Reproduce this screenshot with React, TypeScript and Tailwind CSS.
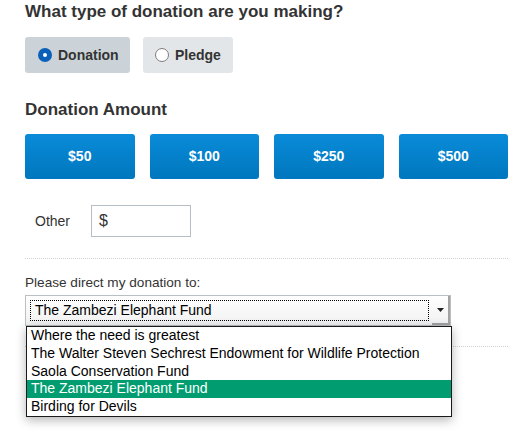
import React from 'react';

const amounts = ['$50', '$100', '$250', '$500'];

const funds = [
  'Where the need is greatest',
  'The Walter Steven Sechrest Endowment for Wildlife Protection',
  'Saola Conservation Fund',
  'The Zambezi Elephant Fund',
  'Birding for Devils',
];

const RadioDot = ({ checked }: { checked: boolean }) =>
  checked ? (
    <span className="w-[14px] h-[14px] rounded-full bg-[#0a5fb8] flex items-center justify-center">
      <span className="w-[4px] h-[4px] rounded-full bg-white" />
    </span>
  ) : (
    <span className="w-[14px] h-[14px] rounded-full bg-white border border-[#7d7d7d]" />
  );

const App = () => {
  const selected = 'The Zambezi Elephant Fund';

  return (
    <div className="w-[530px] h-[436px] bg-white pl-[25px] pr-[22px] pt-[2px] text-[#333] font-['Liberation_Sans',Arial,sans-serif] overflow-hidden">
      <h2 className="text-[17px] leading-[20px] font-bold">What type of donation are you making?</h2>

      <div className="flex gap-[13px] mt-[15px]">
        <label className="w-[105px] h-[36px] rounded-[3px] bg-[#ccd3d8] flex items-center pl-[13px] gap-[6px]">
          <RadioDot checked />
          <span className="text-[14px] font-bold">Donation</span>
        </label>
        <label className="w-[90px] h-[36px] rounded-[3px] bg-[#e3e6e9] flex items-center pl-[12px] gap-[6px]">
          <RadioDot checked={false} />
          <span className="text-[14px] font-bold">Pledge</span>
        </label>
      </div>

      <h2 className="text-[17px] leading-[20px] font-bold mt-[27px]">Donation Amount</h2>

      <div className="flex gap-[15px] mt-[14px]">
        {amounts.map((a) => (
          <button
            key={a}
            className="w-[110px] h-[45px] rounded-[3px] bg-gradient-to-b from-[#0a8bd8] to-[#0077be] text-white text-[14px] font-bold"
          >
            {a}
          </button>
        ))}
      </div>

      <div className="flex items-center mt-[26px] pl-[10px]">
        <span className="text-[14px] w-[56px]">Other</span>
        <div className="w-[100px] h-[32px] border border-[#b5bec4] flex items-center pl-[7px] text-[16px]">$</div>
      </div>

      <div className="mt-[21px] border-t border-dotted border-[#d0d0d0] w-[483px]" />

      <div className="text-[13.6px] leading-[16px] mt-[16px]">Please direct my donation to:</div>

      <div className="relative mt-[4px] w-[426px]">
        <div className="h-[31px] border border-[#b9bfc3] bg-gradient-to-b from-white to-[#f1f1f1] flex items-center pl-[4px] pr-0">
          <div className="flex-1 h-[21px] border border-dotted border-black flex items-center pl-[4px] text-[14px] text-black">
            {selected}
          </div>
          <div className="w-[18px] h-full flex items-center justify-center border-r-2 border-b-2 border-[#a3a3a3] ml-[3px]">
            <svg width="7" height="4" viewBox="0 0 7 4">
              <path d="M0 0h7L3.5 4z" fill="#222" />
            </svg>
          </div>
        </div>

        <div className="absolute left-[1px] top-[31px] w-[426px] bg-white border border-[#1a1a1a] shadow-[0_3px_10px_rgba(0,0,0,0.3)] z-10">
          {funds.map((f) => (
            <div
              key={f}
              className={`h-[17.8px] leading-[17.8px] pl-[4px] text-[14px] whitespace-nowrap ${
                f === selected ? 'bg-[#019d70] text-white' : 'text-black'
              }`}
            >
              {f}
            </div>
          ))}
        </div>
      </div>

      <div className="mt-[20px] border-t border-dotted border-[#d0d0d0] w-[483px]" />
    </div>
  );
};

export default App;
